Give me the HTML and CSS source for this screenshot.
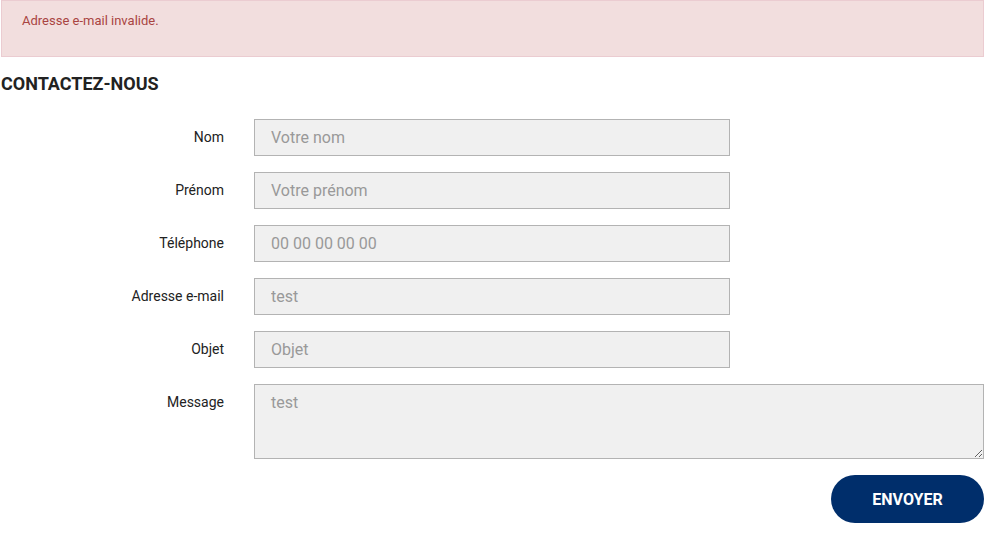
FILE: index.html
```html
<!DOCTYPE html>
<html lang="fr">
<head>
<meta charset="utf-8">
<title>Contactez-nous</title>
<link rel="stylesheet" href="styles.css">
</head>
<body>
<div class="page">
  <div class="alert">Adresse e-mail invalide.</div>
  <h2 class="title">CONTACTEZ-NOUS</h2>
  <form class="form">
    <div class="row">
      <label class="label">Nom</label>
      <input class="field" type="text" placeholder="Votre nom">
    </div>
    <div class="row">
      <label class="label">Prénom</label>
      <input class="field" type="text" placeholder="Votre prénom">
    </div>
    <div class="row">
      <label class="label">Téléphone</label>
      <input class="field" type="text" placeholder="00 00 00 00 00">
    </div>
    <div class="row">
      <label class="label">Adresse e-mail</label>
      <input class="field filled" type="text" value="test">
    </div>
    <div class="row">
      <label class="label">Objet</label>
      <input class="field" type="text" placeholder="Objet">
    </div>
    <div class="row row-wide">
      <label class="label">Message</label>
      <textarea class="field area filled">test</textarea>
    </div>
    <div class="actions">
      <button class="submit" type="button">ENVOYER</button>
    </div>
  </form>
</div>
</body>
</html>
```
FILE: styles.css
```css
html, body {
  margin: 0;
  padding: 0;
  background: #fff;
}
body {
  font-family: Roboto, "Liberation Sans", sans-serif;
  color: #222;
}
.page {
  margin-left: 1px;
  width: 983px;
}
.alert {
  box-sizing: border-box;
  height: 57px;
  background: #f2dede;
  border: 1px solid #ebccd1;
  color: #a94442;
  font-size: 13px;
  line-height: 16px;
  padding: 12px 20px;
}
.title {
  margin: 16px 0 0 0;
  font-size: 18px;
  line-height: 22px;
  font-weight: 700;
  color: #222;
}
.form {
  margin-top: 24px;
  display: flex;
  flex-direction: column;
  gap: 16px;
}
.row {
  display: grid;
  grid-template-columns: 223px 476px;
  column-gap: 30px;
  align-items: start;
}
.row-wide {
  grid-template-columns: 223px 1fr;
}
.label {
  text-align: right;
  font-size: 14px;
  line-height: 18px;
  padding-top: 9px;
  color: #222;
}
.field {
  box-sizing: border-box;
  height: 37px;
  width: 100%;
  margin: 0;
  background: #f0f0f0;
  border: 1px solid #b3b3b3;
  border-radius: 0;
  padding: 0 16px;
  font-family: Roboto, "Liberation Sans", sans-serif;
  font-size: 16px;
  color: #999;
  outline: none;
}
.field::placeholder {
  color: #999;
  opacity: 1;
}
.area {
  height: 75px;
  padding: 8px 16px;
  line-height: 20px;
  resize: vertical;
  display: block;
}
.actions {
  display: flex;
  justify-content: flex-end;
}
.submit {
  width: 153px;
  height: 48px;
  border: none;
  border-radius: 24px;
  background: #002e6b;
  color: #fff;
  font-family: Roboto, "Liberation Sans", sans-serif;
  font-weight: 700;
  font-size: 16px;
  cursor: pointer;
}
```
